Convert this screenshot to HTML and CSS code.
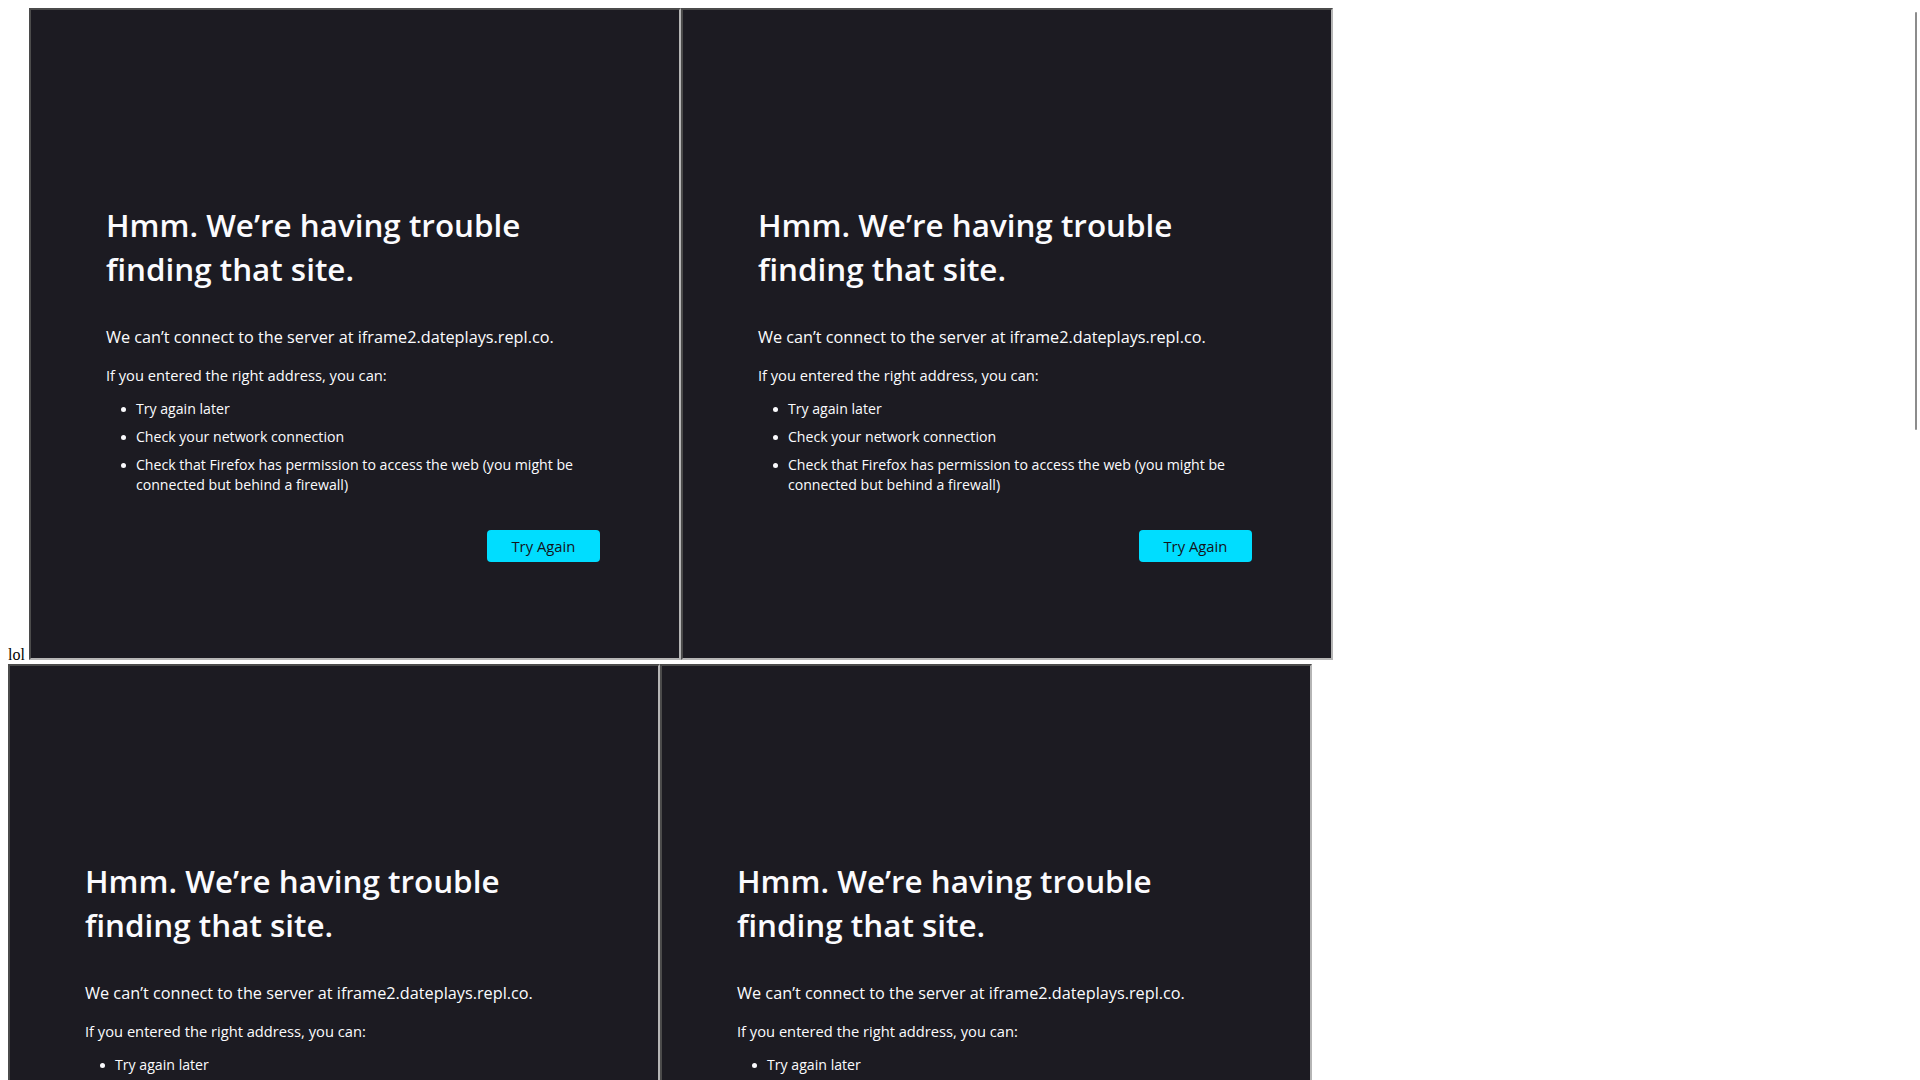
FILE: index.html
```html
<!DOCTYPE html>
<html lang="en">
<head>
<meta charset="utf-8">
<title>lol</title>
<link rel="stylesheet" href="styles.css">
</head>
<body>
<div class="row">lol <div class="frame"><div class="page"><h1 class="title">Hmm. We’re having trouble finding that site.</h1><p class="lead">We can’t connect to the server at iframe2.dateplays.repl.co.</p><p class="hint">If you entered the right address, you can:</p><ul class="tips"><li>Try again later</li><li>Check your network connection</li><li>Check that Firefox has permission to access the web (you might be connected but behind a firewall)</li></ul><div class="actions"><button class="btn">Try Again</button></div></div></div><div class="frame"><div class="page"><h1 class="title">Hmm. We’re having trouble finding that site.</h1><p class="lead">We can’t connect to the server at iframe2.dateplays.repl.co.</p><p class="hint">If you entered the right address, you can:</p><ul class="tips"><li>Try again later</li><li>Check your network connection</li><li>Check that Firefox has permission to access the web (you might be connected but behind a firewall)</li></ul><div class="actions"><button class="btn">Try Again</button></div></div></div></div>
<div class="row"><div class="frame"><div class="page"><h1 class="title">Hmm. We’re having trouble finding that site.</h1><p class="lead">We can’t connect to the server at iframe2.dateplays.repl.co.</p><p class="hint">If you entered the right address, you can:</p><ul class="tips"><li>Try again later</li><li>Check your network connection</li><li>Check that Firefox has permission to access the web (you might be connected but behind a firewall)</li></ul><div class="actions"><button class="btn">Try Again</button></div></div></div><div class="frame"><div class="page"><h1 class="title">Hmm. We’re having trouble finding that site.</h1><p class="lead">We can’t connect to the server at iframe2.dateplays.repl.co.</p><p class="hint">If you entered the right address, you can:</p><ul class="tips"><li>Try again later</li><li>Check your network connection</li><li>Check that Firefox has permission to access the web (you might be connected but behind a firewall)</li></ul><div class="actions"><button class="btn">Try Again</button></div></div></div></div>
<div class="scroll-thumb"></div>
</body>
</html>
```
FILE: styles.css
```css
html {
  overflow: hidden;
}

body {
  margin: 8px;
  font-family: "Liberation Serif", serif;
  font-size: 16px;
  color: #000;
  background: #fff;
}

.row {
  white-space: nowrap;
}

.frame {
  display: inline-block;
  width: 648px;
  height: 648px;
  border: 2px solid;
  border-color: #4b4b4b #b5b5b5 #b5b5b5 #4b4b4b;
  overflow: hidden;
  background: #1c1b22;
  vertical-align: baseline;
  white-space: normal;
}

.page {
  padding: 193px 79px 0 75px;
  font-family: "Open Sans", sans-serif;
  color: #fbfbfe;
  font-size: 14px;
  line-height: 20px;
}

.title {
  margin: 0;
  font-size: 31.4px;
  line-height: 44px;
  font-weight: 600;
}

.lead {
  margin: 35px 0 0;
  font-size: 16.25px;
  line-height: 22px;
}

.hint {
  margin: 17px 0 0;
  font-size: 14.7px;
}

.tips {
  margin: 14px 0 0;
  padding-left: 30px;
  list-style: none;
  font-size: 14.15px;
}

.tips li {
  position: relative;
}

.tips li::before {
  content: "";
  position: absolute;
  left: -15px;
  top: 8px;
  width: 5px;
  height: 5px;
  border-radius: 50%;
  background: #fbfbfe;
}

.tips li + li {
  margin-top: 8px;
}

.actions {
  display: flex;
  justify-content: flex-end;
  margin-top: 35px;
}

.btn {
  width: 113px;
  height: 32px;
  padding: 0;
  border: 0;
  border-radius: 4px;
  background: #00ddff;
  color: #15141a;
  font-family: "Open Sans", sans-serif;
  font-size: 14.8px;
}

.scroll-thumb {
  position: fixed;
  top: 12px;
  right: 3px;
  width: 2px;
  height: 418px;
  border-radius: 1px;
  background: #8c8c8c;
}
```
